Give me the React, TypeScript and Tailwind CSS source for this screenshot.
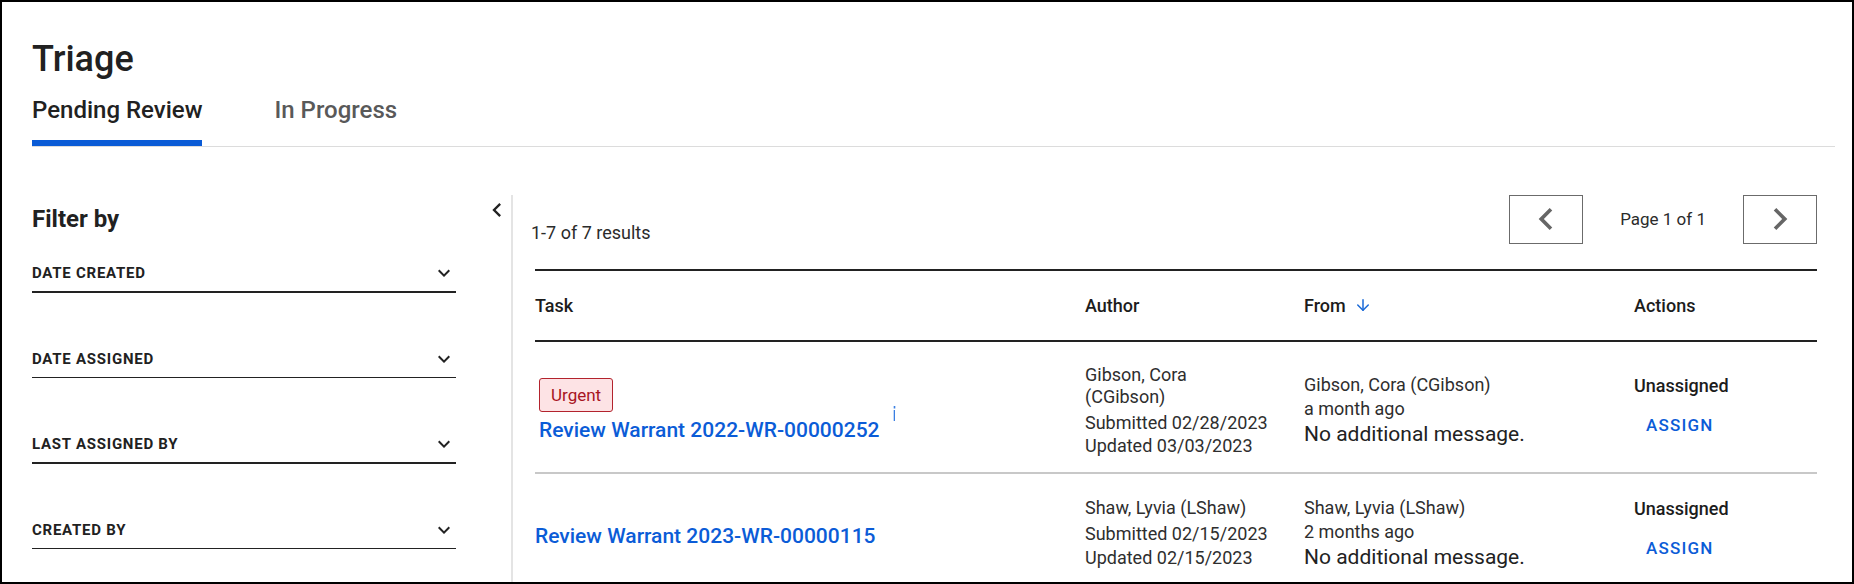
import { ArrowDown } from 'lucide-react';

const FILTERS = [
  { label: 'DATE CREATED', thick: true },
  { label: 'DATE ASSIGNED', thick: false },
  { label: 'LAST ASSIGNED BY', thick: true },
  { label: 'CREATED BY', thick: false },
];

const TASKS = [
  {
    id: '2022-WR-00000252',
    urgent: true,
    author: ['Gibson, Cora', '(CGibson)'],
    submitted: '02/28/2023',
    updated: '03/03/2023',
    from: 'Gibson, Cora (CGibson)',
    when: 'a month ago',
  },
  {
    id: '2023-WR-00000115',
    urgent: false,
    author: ['Shaw, Lyvia (LShaw)'],
    submitted: '02/15/2023',
    updated: '02/15/2023',
    from: 'Shaw, Lyvia (LShaw)',
    when: '2 months ago',
  },
];

const COLS = 'grid grid-cols-[550px_219px_330px_183px]';

const ExpandMore = () => (
  <svg width="24" height="24" viewBox="0 0 24 24" className="shrink-0 fill-[#222]">
    <path d="M16.59 8.59L12 13.17 7.41 8.59 6 10l6 6 6-6z" />
  </svg>
);

const ChevronLeftIcon = ({ size }: { size: number }) => (
  <svg width={size} height={size} viewBox="0 0 24 24">
    <path d="M15.41 7.41L14 6l-6 6 6 6 1.41-1.41L10.83 12z" fill="currentColor" />
  </svg>
);

const ChevronRightIcon = ({ size }: { size: number }) => (
  <svg width={size} height={size} viewBox="0 0 24 24">
    <path d="M10 6L8.59 7.41 13.17 12l-4.58 4.59L10 18l6-6z" fill="currentColor" />
  </svg>
);

export default function App() {
  return (
    <div className="h-[584px] overflow-hidden border-2 border-black bg-white font-[Roboto,sans-serif] text-[#212121]">
      <div className="pl-[30px] pr-[17px] pt-[36px]">
        <h1 className="text-[36px] font-medium leading-[1.2]">Triage</h1>

        {/* Tabs */}
        <div className="mt-[15px] flex gap-[72px] border-b border-[#dcdcdc]">
          <button className="border-b-[6px] border-[#0a5bd6] pb-[15px] text-[24px] font-medium leading-[1.2] text-[#212121]">
            Pending Review
          </button>
          <button className="border-b-[6px] border-transparent pb-[15px] text-[24px] font-medium leading-[1.2] text-[#595959]">
            In Progress
          </button>
        </div>
      </div>

      <div className="mr-[35px] mt-[48px] flex pl-[30px]">
        {/* Filter panel */}
        <div className="flex w-[479px] shrink-0">
          <div className="w-[424px] pt-[10px]">
            <h2 className="text-[24px] font-bold leading-[1.2]">Filter by</h2>
            <div className="mt-[27px] flex flex-col gap-[54px]">
              {FILTERS.map((f) => (
                <div
                  key={f.label}
                  className={`flex items-center justify-between pb-[6px] border-[#222] ${f.thick ? 'border-b-2' : 'border-b'}`}
                >
                  <span className="text-[15px] font-bold leading-[24px] tracking-[0.05em]">{f.label}</span>
                  <ExpandMore />
                </div>
              ))}
            </div>
          </div>
          <button className="ml-auto mt-[1px] self-start text-[#222]">
            <ChevronLeftIcon size={28} />
          </button>
        </div>

        {/* Results */}
        <div className="flex-1 border-l-2 border-[#e4e4e4] pl-[18px]">
          <div className="flex items-start justify-between">
            <p className="pt-[24px] text-[18px] leading-[27px] text-[#2b2b2b]">1-7 of 7 results</p>
            <div className="flex items-center gap-[37px]">
              <button className="flex h-[49px] w-[74px] items-center justify-center border border-[#6b6b6b] text-[#666]">
                <ChevronLeftIcon size={44} />
              </button>
              <span className="text-[17px] text-[#2b2b2b]">Page 1 of 1</span>
              <button className="flex h-[49px] w-[74px] items-center justify-center border border-[#6b6b6b] text-[#666]">
                <ChevronRightIcon size={44} />
              </button>
            </div>
          </div>

          <div className="ml-[4px] mt-[23px] border-t-2 border-[#222]">
            <div className={`${COLS} h-[71px] items-center border-b-2 border-[#222] text-[18px] font-medium text-[#1c1c1c]`}>
              <div>Task</div>
              <div>Author</div>
              <div className="flex items-center gap-[8px]">
                From <ArrowDown size={18} strokeWidth={2} className="text-[#1a6ad8]" />
              </div>
              <div>Actions</div>
            </div>

            {TASKS.map((t, i) => (
              <div
                key={t.id}
                className={`${COLS} items-center pb-[14px] pt-[22px] text-[18px] text-[#2e2e2e] ${i === 0 ? 'border-b-2 border-[#c8c8c8]' : ''}`}
              >
                {/* Task */}
                <div className={t.urgent ? 'pl-[4px]' : 'pt-[6px]'}>
                  {t.urgent && (
                    <span className="mb-[5px] inline-flex rounded-[3px] border-[1.5px] border-[#b3232d] bg-[#fde3e5] px-[11px] py-[3px] text-[17px] leading-[26px] text-[#a8141f]">
                      Urgent
                    </span>
                  )}
                  <div className="flex items-start">
                    <a href="#" className="text-[21px] font-medium leading-[26px] text-[#0b5cd7]">
                      Review Warrant {t.id}
                    </a>
                    {t.urgent && (
                      <svg width="3" height="15" viewBox="0 0 3 15" className="-mt-[11px] ml-[13px] fill-[#3a7fe2]">
                        <rect x="0.7" y="0" width="1.6" height="2.5" />
                        <rect x="0.7" y="4" width="1.3" height="11" />
                      </svg>
                    )}
                  </div>
                </div>

                {/* Author */}
                <div>
                  {t.author.map((line) => (
                    <div key={line} className="leading-[22px]">
                      {line}
                    </div>
                  ))}
                  <div className="mt-[3px] leading-[23.5px]">Submitted {t.submitted}</div>
                  <div className="leading-[23.5px]">Updated {t.updated}</div>
                </div>

                {/* From */}
                <div>
                  <div className="leading-[24px]">{t.from}</div>
                  <div className="leading-[24px]">{t.when}</div>
                  <div className="text-[21px] leading-[27px] text-[#222]">No additional message.</div>
                </div>

                {/* Actions */}
                <div className="flex flex-col items-start">
                  <div className="font-medium leading-[24px] text-[#1c1c1c]">Unassigned</div>
                  <button className="mt-[5px] px-[12px] py-[10px] text-[17px] font-medium leading-[24px] tracking-[0.07em] text-[#0b5cd7]">
                    ASSIGN
                  </button>
                </div>
              </div>
            ))}
          </div>
        </div>
      </div>
    </div>
  );
}
